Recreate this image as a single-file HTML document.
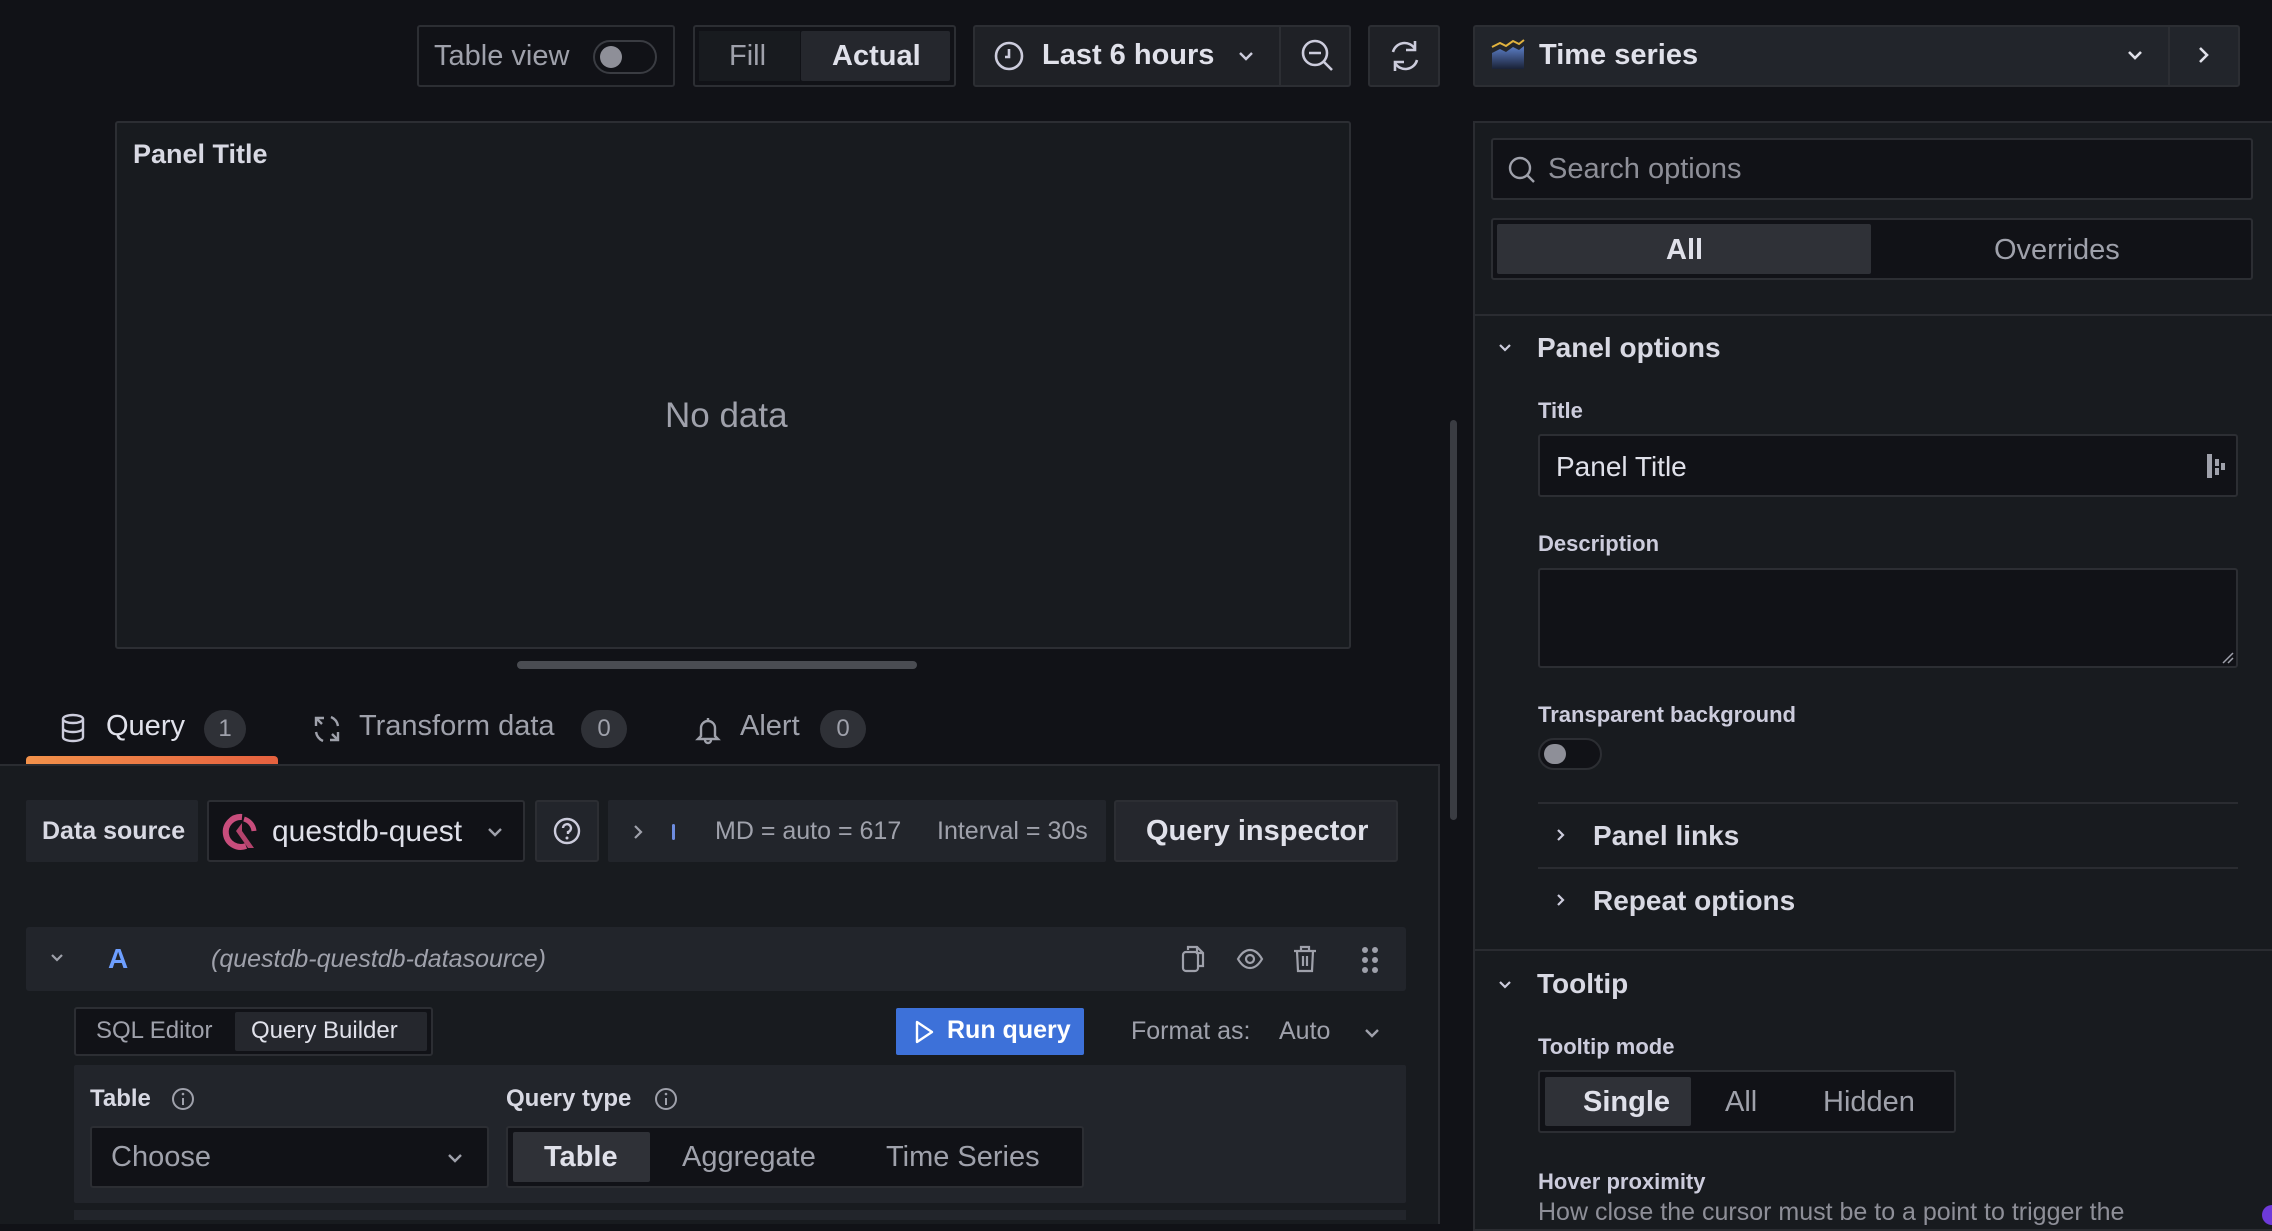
<!DOCTYPE html>
<html><head><meta charset="utf-8"><style>
*{box-sizing:border-box;margin:0;padding:0}
body{width:2272px;height:1218px;background:#111217;font-family:"Liberation Sans",sans-serif;color:#ccccdc;position:relative;overflow:hidden}
.a{position:absolute}
.box{position:absolute;border:2px solid #2c2e33;border-radius:3px}
.t{position:absolute;white-space:nowrap}
.lbl{font-size:22px;font-weight:bold;color:#ccccdc}
.sec{font-size:28px;color:#d8d9e3;font-weight:bold}
svg{position:absolute;overflow:visible}
</style></head><body>

<!-- top toolbar -->
<div class="box" style="left:417px;top:25px;width:258px;height:62px;background:#111217"></div>
<div class="t" style="left:434px;top:40px;font-size:29px;color:#9fa1ab">Table view</div>
<div class="a" style="left:593px;top:40px;width:64px;height:34px;border:2px solid #3a3c42;border-radius:17px;background:#111217"></div>
<div class="a" style="left:600px;top:46px;width:22px;height:22px;border-radius:11px;background:#8e8f98"></div>

<div class="box" style="left:693px;top:25px;width:263px;height:62px;background:#111217"></div>
<div class="a" style="left:699px;top:31px;width:101px;height:50px;background:#181b1f"></div>
<div class="a" style="left:801px;top:31px;width:149px;height:50px;background:#25272d;border-radius:2px"></div>
<div class="t" style="left:729px;top:40px;font-size:29px;color:#9fa1ab">Fill</div>
<div class="t" style="left:832px;top:40px;font-size:29px;color:#e0e1ea;font-weight:bold">Actual</div>

<div class="box" style="left:973px;top:25px;width:378px;height:62px;background:#1f2126"></div>
<div class="a" style="left:1279px;top:27px;width:2px;height:58px;background:#2c2e33"></div>
<svg style="left:993px;top:40px" width="32" height="32" viewBox="0 0 32 32"><circle cx="16" cy="16" r="13" fill="none" stroke="#ccccdc" stroke-width="2.6"/><path d="M16 9v8h-4" fill="none" stroke="#ccccdc" stroke-width="2.6"/></svg>
<div class="t" style="left:1042px;top:39px;font-size:29px;font-weight:bold;color:#e0e1ea">Last 6 hours</div>
<svg style="left:1238px;top:50px" width="16" height="12" viewBox="0 0 16 12"><path d="M2 3l6 6 6-6" fill="none" stroke="#ccccdc" stroke-width="2.4"/></svg>
<svg style="left:1300px;top:38px" width="36" height="36" viewBox="0 0 36 36"><circle cx="15" cy="15" r="12" fill="none" stroke="#ccccdc" stroke-width="2.6"/><path d="M9 15h12M24 24l8 8" fill="none" stroke="#ccccdc" stroke-width="2.6"/></svg>

<div class="box" style="left:1368px;top:25px;width:72px;height:62px;background:#1f2126"></div>
<svg style="left:1388px;top:38px" width="34" height="36" viewBox="0 0 34 36"><path d="M27 11A12 12 0 0 0 5 14M7 25a12 12 0 0 0 22-3" fill="none" stroke="#ccccdc" stroke-width="2.6"/><path d="M27 3v9h-9M7 33v-9h9" fill="none" stroke="#ccccdc" stroke-width="2.6"/></svg>

<!-- Panel preview -->
<div class="box" style="left:115px;top:121px;width:1236px;height:528px;background:#181b1f"></div>
<div class="t" style="left:133px;top:139px;font-size:27px;font-weight:bold;color:#d8d9e3">Panel Title</div>
<div class="t" style="left:665px;top:396px;font-size:35px;color:#9fa1ab">No data</div>
<div class="a" style="left:517px;top:661px;width:400px;height:8px;border-radius:4px;background:#4a4c52"></div>

<!-- tabs -->
<svg style="left:60px;top:713px" width="26" height="30" viewBox="0 0 26 30"><ellipse cx="13" cy="6" rx="10" ry="4" fill="none" stroke="#ccccdc" stroke-width="2.4"/><path d="M3 6v18c0 2.5 4.5 4 10 4s10-1.5 10-4V6M3 15c0 2.5 4.5 4 10 4s10-1.5 10-4" fill="none" stroke="#ccccdc" stroke-width="2.4"/></svg>
<div class="t" style="left:106px;top:710px;font-size:29px;color:#e0e1ea">Query</div>
<div class="a" style="left:204px;top:710px;width:42px;height:38px;border-radius:19px;background:#2f3137;color:#9fa1ab;font-size:24px;text-align:center;line-height:38px">1</div>
<svg style="left:313px;top:714px" width="28" height="30" viewBox="0 0 28 30"><path d="M3 12V4h8M25 18v8h-8M3 4l6 6M25 26l-6-6M18 3a12 12 0 0 1 7 9M10 27a12 12 0 0 1-7-9" fill="none" stroke="#9fa1ab" stroke-width="2.4"/></svg>
<div class="t" style="left:359px;top:710px;font-size:29px;color:#9fa1ab">Transform data</div>
<div class="a" style="left:581px;top:710px;width:46px;height:38px;border-radius:19px;background:#2f3137;color:#9fa1ab;font-size:24px;text-align:center;line-height:38px">0</div>
<svg style="left:696px;top:715px" width="24" height="30" viewBox="0 0 24 30"><path d="M5 21V13a7 7 0 0 1 14 0v8l3 3H2zM9 25a3 3 0 0 0 6 0M12 3v3" fill="none" stroke="#9fa1ab" stroke-width="2.4"/></svg>
<div class="t" style="left:740px;top:710px;font-size:29px;color:#9fa1ab">Alert</div>
<div class="a" style="left:820px;top:710px;width:46px;height:38px;border-radius:19px;background:#2f3137;color:#9fa1ab;font-size:24px;text-align:center;line-height:38px">0</div>
<div class="a" style="left:26px;top:756px;width:252px;height:8px;border-radius:4px 4px 0 0;background:linear-gradient(90deg,#f2914a,#e6613f)"></div>

<!-- query area -->
<div class="a" style="left:0;top:764px;width:1440px;height:460px;background:#181b1f;border-top:2px solid #2a2c31;border-right:2px solid #2a2c31"></div>
<div class="a" style="left:1450px;top:420px;width:7px;height:400px;border-radius:4px;background:#3a3c42"></div>

<div class="a" style="left:26px;top:800px;width:172px;height:62px;background:#22252b;border-radius:2px"></div>
<div class="t" style="left:42px;top:817px;font-size:25px;font-weight:bold;color:#d8d9e3">Data source</div>
<div class="box" style="left:207px;top:800px;width:318px;height:62px;background:#111217"></div>
<svg style="left:222px;top:813px" width="40" height="38" viewBox="0 0 40 38"><path d="M20 4A15 15 0 1 0 24 33" fill="none" stroke="#c84d7c" stroke-width="6"/><path d="M20 10l-6 8 12 17h6L20 18" fill="#b3436c"/><path d="M22 6a14 14 0 0 1 10 12" fill="none" stroke="#c84d7c" stroke-width="5"/></svg>
<div class="t" style="left:272px;top:815px;font-size:30px;color:#e0e1ea">questdb-quest</div>
<svg style="left:487px;top:826px" width="16" height="12" viewBox="0 0 16 12"><path d="M2 3l6 6 6-6" fill="none" stroke="#9fa1ab" stroke-width="2.4"/></svg>
<div class="box" style="left:535px;top:800px;width:64px;height:62px;background:#22252b"></div>
<svg style="left:552px;top:816px" width="30" height="30" viewBox="0 0 30 30"><circle cx="15" cy="15" r="12" fill="none" stroke="#ccccdc" stroke-width="2.4"/><path d="M11 12a4 4 0 1 1 5 4v2" fill="none" stroke="#ccccdc" stroke-width="2.4"/><circle cx="15" cy="22" r="1.5" fill="#ccccdc"/></svg>
<div class="a" style="left:608px;top:800px;width:498px;height:62px;background:#22252b;border-radius:2px"></div>
<svg style="left:633px;top:824px" width="10" height="16" viewBox="0 0 10 16"><path d="M2 2l6 6-6 6" fill="none" stroke="#9fa1ab" stroke-width="2.2"/></svg>
<div class="a" style="left:672px;top:824px;width:3px;height:16px;background:#6e8de0;border-radius:2px"></div>
<div class="t" style="left:715px;top:817px;font-size:25px;color:#9fa1ab">MD = auto = 617</div>
<div class="t" style="left:937px;top:817px;font-size:25px;color:#9fa1ab">Interval = 30s</div>
<div class="box" style="left:1114px;top:800px;width:284px;height:62px;background:#25272d"></div>
<div class="t" style="left:1146px;top:815px;font-size:29px;font-weight:bold;color:#e0e1ea">Query inspector</div>

<div class="a" style="left:26px;top:927px;width:1380px;height:64px;background:#22252b;border-radius:3px"></div>
<svg style="left:50px;top:953px" width="14" height="10" viewBox="0 0 14 10"><path d="M2 2l5 5 5-5" fill="none" stroke="#9fa1ab" stroke-width="2.2"/></svg>
<div class="t" style="left:108px;top:943px;font-size:28px;font-weight:bold;color:#6e9fff">A</div>
<div class="t" style="left:211px;top:945px;font-size:25px;font-style:italic;color:#9fa1ab">(questdb-questdb-datasource)</div>
<svg style="left:1180px;top:944px" width="26" height="30" viewBox="0 0 26 30"><path d="M8 6V3h9l6 6v13h-4M17 3v6h6" fill="none" stroke="#9fa1ab" stroke-width="2.2"/><rect x="3" y="8" width="15" height="19" rx="3" fill="none" stroke="#9fa1ab" stroke-width="2.2"/></svg>
<svg style="left:1236px;top:948px" width="28" height="22" viewBox="0 0 28 22"><path d="M2 11C6 4 10 2 14 2s8 2 12 9c-4 7-8 9-12 9s-8-2-12-9z" fill="none" stroke="#9fa1ab" stroke-width="2.2"/><circle cx="14" cy="11" r="4" fill="none" stroke="#9fa1ab" stroke-width="2.2"/></svg>
<svg style="left:1293px;top:945px" width="24" height="28" viewBox="0 0 24 28"><path d="M1 6h22M8 6V2h8v4M4 6l1 20h14l1-20M10 11v10M14 11v10" fill="none" stroke="#9fa1ab" stroke-width="2.2"/></svg>
<svg style="left:1362px;top:947px" width="16" height="26" viewBox="0 0 16 26"><g fill="#9fa1ab"><circle cx="3" cy="3" r="3"/><circle cx="13" cy="3" r="3"/><circle cx="3" cy="13" r="3"/><circle cx="13" cy="13" r="3"/><circle cx="3" cy="23" r="3"/><circle cx="13" cy="23" r="3"/></g></svg>

<div class="box" style="left:74px;top:1007px;width:359px;height:49px;background:#111217"></div>
<div class="t" style="left:96px;top:1017px;font-size:24px;color:#9fa1ab">SQL Editor</div>
<div class="a" style="left:235px;top:1012px;width:192px;height:39px;background:#25272d;border-radius:2px"></div>
<div class="t" style="left:251px;top:1017px;font-size:24px;color:#e0e1ea">Query Builder</div>
<div class="a" style="left:896px;top:1008px;width:188px;height:47px;background:#3d71d9;border-radius:2px"></div>
<svg style="left:914px;top:1020px" width="20" height="24" viewBox="0 0 20 24"><path d="M3 2v20l15-10z" fill="none" stroke="#fff" stroke-width="2.4" stroke-linejoin="round"/></svg>
<div class="t" style="left:947px;top:1016px;font-size:25px;font-weight:bold;color:#fff">Run query</div>
<div class="t" style="left:1131px;top:1017px;font-size:25px;color:#9fa1ab">Format as:</div>
<div class="t" style="left:1279px;top:1017px;font-size:25px;color:#9fa1ab">Auto</div>
<svg style="left:1364px;top:1027px" width="16" height="12" viewBox="0 0 16 12"><path d="M2 3l6 6 6-6" fill="none" stroke="#9fa1ab" stroke-width="2.4"/></svg>

<div class="a" style="left:74px;top:1065px;width:1332px;height:138px;background:#22252b;border-radius:2px"></div>
<div class="t" style="left:90px;top:1085px;font-size:24px;font-weight:bold;color:#d8d9e3">Table</div>
<svg style="left:171px;top:1087px" width="24" height="24" viewBox="0 0 24 24"><circle cx="12" cy="12" r="10" fill="none" stroke="#9fa1ab" stroke-width="2"/><path d="M12 11v7" stroke="#9fa1ab" stroke-width="2"/><circle cx="12" cy="7" r="1.3" fill="#9fa1ab"/></svg>
<div class="t" style="left:506px;top:1085px;font-size:24px;font-weight:bold;color:#d8d9e3">Query type</div>
<svg style="left:654px;top:1087px" width="24" height="24" viewBox="0 0 24 24"><circle cx="12" cy="12" r="10" fill="none" stroke="#9fa1ab" stroke-width="2"/><path d="M12 11v7" stroke="#9fa1ab" stroke-width="2"/><circle cx="12" cy="7" r="1.3" fill="#9fa1ab"/></svg>
<div class="box" style="left:90px;top:1126px;width:399px;height:62px;background:#111217"></div>
<div class="t" style="left:111px;top:1141px;font-size:29px;color:#9fa1ab">Choose</div>
<svg style="left:447px;top:1152px" width="16" height="12" viewBox="0 0 16 12"><path d="M2 3l6 6 6-6" fill="none" stroke="#9fa1ab" stroke-width="2.4"/></svg>
<div class="box" style="left:506px;top:1126px;width:578px;height:62px;background:#111217"></div>
<div class="a" style="left:513px;top:1132px;width:137px;height:50px;background:#2f3137;border-radius:2px"></div>
<div class="t" style="left:544px;top:1141px;font-size:29px;color:#e0e1ea;font-weight:bold">Table</div>
<div class="t" style="left:682px;top:1141px;font-size:29px;color:#9fa1ab">Aggregate</div>
<div class="t" style="left:886px;top:1141px;font-size:29px;color:#9fa1ab">Time Series</div>
<div class="a" style="left:74px;top:1210px;width:1332px;height:10px;background:#22252b"></div>

<!-- right side -->
<div class="box" style="left:1473px;top:25px;width:767px;height:62px;background:#22252b"></div>
<div class="a" style="left:2168px;top:27px;width:2px;height:58px;background:#2c2e33"></div>
<svg style="left:1491px;top:37px" width="34" height="32" viewBox="0 0 34 32"><defs><linearGradient id="g" x1="0" y1="0" x2="0" y2="1"><stop offset="0" stop-color="#5c7fc8"/><stop offset="1" stop-color="#1a2236"/></linearGradient></defs><path d="M1 16l8-4 6 3 7-5 6 3 5-4V32H1z" fill="url(#g)"/><path d="M1 10l8-4 6 3 7-5 6 3 5-4" fill="none" stroke="#e2b33e" stroke-width="2"/></svg>
<div class="t" style="left:1539px;top:39px;font-size:29px;font-weight:bold;color:#e0e1ea">Time series</div>
<svg style="left:2127px;top:49px" width="16" height="12" viewBox="0 0 16 12"><path d="M2 3l6 6 6-6" fill="none" stroke="#e0e1ea" stroke-width="2.6"/></svg>
<svg style="left:2197px;top:46px" width="12" height="18" viewBox="0 0 12 18"><path d="M3 2l7 7-7 7" fill="none" stroke="#e0e1ea" stroke-width="2.6"/></svg>

<div class="a" style="left:1473px;top:121px;width:810px;height:1110px;background:#181b1f;border:2px solid #2a2c31"></div>
<div class="box" style="left:1491px;top:138px;width:762px;height:62px;background:#111217"></div>
<svg style="left:1507px;top:155px" width="30" height="30" viewBox="0 0 30 30"><circle cx="13" cy="13" r="10" fill="none" stroke="#9fa1ab" stroke-width="2.4"/><path d="M20 20l7 7" stroke="#9fa1ab" stroke-width="2.4"/></svg>
<div class="t" style="left:1548px;top:153px;font-size:29px;color:#8e8f98">Search options</div>
<div class="box" style="left:1491px;top:218px;width:762px;height:62px;background:#111217"></div>
<div class="a" style="left:1497px;top:224px;width:374px;height:50px;background:#2f3137;border-radius:2px"></div>
<div class="t" style="left:1666px;top:234px;font-size:29px;font-weight:bold;color:#e0e1ea">All</div>
<div class="t" style="left:1994px;top:234px;font-size:29px;color:#9fa1ab">Overrides</div>
<div class="a" style="left:1475px;top:314px;width:800px;height:2px;background:#2a2c31"></div>

<svg style="left:1498px;top:343px" width="14" height="10" viewBox="0 0 14 10"><path d="M2 2l5 5 5-5" fill="none" stroke="#ccccdc" stroke-width="2.2"/></svg>
<div class="t sec" style="left:1537px;top:332px">Panel options</div>
<div class="t lbl" style="left:1538px;top:398px">Title</div>
<div class="box" style="left:1538px;top:434px;width:700px;height:63px;background:#111217"></div>
<div class="t" style="left:1556px;top:451px;font-size:28px;color:#e0e1ea">Panel Title</div>
<svg style="left:2206px;top:453px" width="20" height="26" viewBox="0 0 20 26"><rect x="1" y="1" width="5" height="24" fill="#9fa1ab"/><rect x="9" y="6" width="4" height="7" fill="#9fa1ab"/><rect x="9" y="15" width="4" height="7" fill="#9fa1ab"/><rect x="15" y="10" width="4" height="7" fill="#9fa1ab"/></svg>
<div class="t lbl" style="left:1538px;top:531px">Description</div>
<div class="box" style="left:1538px;top:568px;width:700px;height:100px;background:#111217"></div>
<svg style="left:2222px;top:652px" width="12" height="12" viewBox="0 0 12 12"><path d="M1 11L11 1M6 11l5-5" stroke="#9fa1ab" stroke-width="1.5"/></svg>
<div class="t lbl" style="left:1538px;top:702px">Transparent background</div>
<div class="a" style="left:1538px;top:738px;width:64px;height:32px;border:2px solid #2c2e33;border-radius:16px;background:#111217"></div>
<div class="a" style="left:1544px;top:744px;width:22px;height:20px;border-radius:10px;background:#8e8f98"></div>
<div class="a" style="left:1538px;top:802px;width:700px;height:2px;background:#2a2c31"></div>
<svg style="left:1556px;top:828px" width="10" height="14" viewBox="0 0 10 14"><path d="M2 2l5 5-5 5" fill="none" stroke="#ccccdc" stroke-width="2.2"/></svg>
<div class="t sec" style="left:1593px;top:820px">Panel links</div>
<div class="a" style="left:1538px;top:867px;width:700px;height:2px;background:#2a2c31"></div>
<svg style="left:1556px;top:893px" width="10" height="14" viewBox="0 0 10 14"><path d="M2 2l5 5-5 5" fill="none" stroke="#ccccdc" stroke-width="2.2"/></svg>
<div class="t sec" style="left:1593px;top:885px">Repeat options</div>
<div class="a" style="left:1475px;top:949px;width:800px;height:2px;background:#2a2c31"></div>

<svg style="left:1498px;top:980px" width="14" height="10" viewBox="0 0 14 10"><path d="M2 2l5 5 5-5" fill="none" stroke="#ccccdc" stroke-width="2.2"/></svg>
<div class="t sec" style="left:1537px;top:968px">Tooltip</div>
<div class="t lbl" style="left:1538px;top:1034px">Tooltip mode</div>
<div class="box" style="left:1538px;top:1070px;width:418px;height:63px;background:#111217"></div>
<div class="a" style="left:1545px;top:1077px;width:146px;height:49px;background:#2f3137;border-radius:2px"></div>
<div class="t" style="left:1583px;top:1086px;font-size:29px;font-weight:bold;color:#e0e1ea">Single</div>
<div class="t" style="left:1725px;top:1086px;font-size:29px;color:#9fa1ab">All</div>
<div class="t" style="left:1823px;top:1086px;font-size:29px;color:#9fa1ab">Hidden</div>
<div class="t lbl" style="left:1538px;top:1169px">Hover proximity</div>
<div class="t" style="left:1538px;top:1198px;font-size:25px;color:#8e8f98">How close the cursor must be to a point to trigger the</div>
<div class="a" style="left:2262px;top:1205px;width:20px;height:20px;border-radius:10px;background:#6e3ad9"></div>
</body></html>
